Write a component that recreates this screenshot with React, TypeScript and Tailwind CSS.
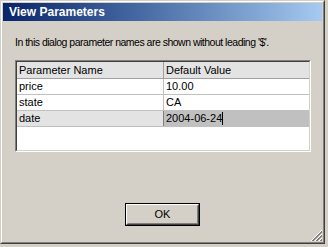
import React from 'react';

const rows = [
  { name: 'price', value: '10.00' },
  { name: 'state', value: 'CA' },
];

export default function App() {
  return (
    <div className="w-[328px] h-[247px] bg-[#d4d0c8] font-['Liberation_Sans',Arial,sans-serif] text-[11px] text-black">
      {/* window frame */}
      <div className="w-[325px] h-[244px] border border-t-[#d4d0c8] border-l-[#d4d0c8] border-b-[#404040] border-r-[#404040]">
        <div className="w-full h-full border border-t-white border-l-white border-b-[#808080] border-r-[#808080] p-[1px] flex flex-col relative">
          {/* title bar */}
          <div className="h-[18px] bg-gradient-to-r from-[#0a246a] to-[#a6caf0] flex items-center pl-[6px]">
            <span className="text-white font-bold text-[12px] leading-none">View Parameters</span>
          </div>

          <div className="flex-1 flex flex-col px-[12px] pr-[11px]">
            <p className="mt-[15px] leading-[13px] h-[13px] whitespace-nowrap text-[10.5px] tracking-[-0.5px]">
              In this dialog parameter names are shown without leading '$'.
            </p>

            {/* grid */}
            <div className="mt-[11px] h-[92px] border border-t-[#808080] border-l-[#808080] border-b-white border-r-white">
              <div className="h-full border border-t-[#404040] border-l-[#404040] border-b-[#d4d0c8] border-r-[#d4d0c8] bg-white">
                <div className="flex h-[17px] bg-[#e3e3e3] border-b border-[#a0a0a0]">
                  <div className="w-[147px] border-r border-[#a0a0a0] pl-[2px] leading-[16px]">Parameter Name</div>
                  <div className="flex-1 pl-[2px] leading-[16px]">Default Value</div>
                </div>
                {rows.map((r) => (
                  <div key={r.name} className="flex h-[16px] border-b border-[#c0c0c0]">
                    <div className="w-[147px] border-r border-[#c0c0c0] pl-[2px] leading-[15px]">{r.name}</div>
                    <div className="flex-1 pl-[2px] leading-[15px]">{r.value}</div>
                  </div>
                ))}
                <div className="flex h-[16px] border-b border-[#c0c0c0]">
                  <div className="w-[147px] bg-[#e3e3e3] border-r border-[#808080] pl-[2px] leading-[15px]">date</div>
                  <div className="flex-1 bg-[#c0c0c0] pl-[2px] leading-[15px] flex items-center">
                    <span>2004-06-24</span>
                    <span className="w-px h-[13px] bg-black" />
                  </div>
                </div>
              </div>
            </div>

            {/* OK button */}
            <div className="mt-[51px] flex justify-center">
              <div className="ml-[-1px] w-[75px] h-[23px] border border-black">
                <div className="w-full h-full border border-t-white border-l-white border-b-[#404040] border-r-[#404040]">
                  <div className="w-full h-full border border-t-[#d4d0c8] border-l-[#d4d0c8] border-b-[#808080] border-r-[#808080] flex items-center justify-center">
                    OK
                  </div>
                </div>
              </div>
            </div>
          </div>

          {/* size grip */}
          <svg className="absolute right-[1px] bottom-[1px]" width="12" height="12" viewBox="0 0 12 12">
            {[0, 4, 8].map((o) => (
              <g key={o}>
                <line x1={12} y1={1 + o} x2={1 + o} y2={12} stroke="white" strokeWidth="1" />
                <line x1={12} y1={2 + o} x2={2 + o} y2={12} stroke="#808080" strokeWidth="1" />
                <line x1={12} y1={3 + o} x2={3 + o} y2={12} stroke="#808080" strokeWidth="1" />
              </g>
            ))}
          </svg>
        </div>
      </div>
    </div>
  );
}
